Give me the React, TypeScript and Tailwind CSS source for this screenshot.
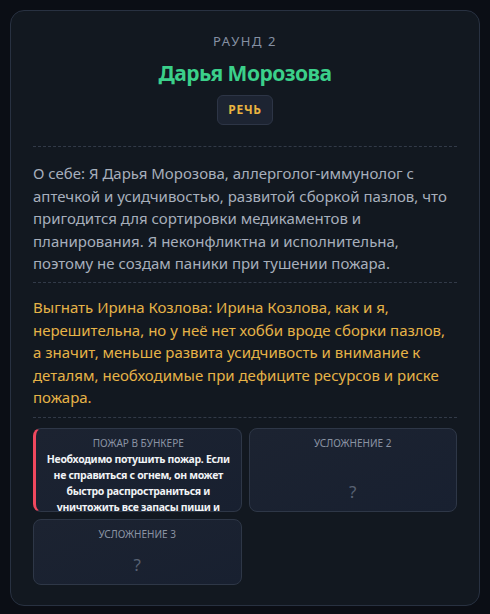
import React from 'react';

const font = { fontFamily: '"Noto Sans", "Open Sans", sans-serif' };

const Divider = () => <div className="border-t border-dashed border-[#323a48]" />;

interface ThreatCardProps {
    title: string;
    body?: string;
    accent?: boolean;
    tall?: boolean;
}

const ThreatCard: React.FC<ThreatCardProps> = ({ title, body, accent, tall }) => (
    <div
        className={`relative overflow-hidden rounded-lg border border-[#2e3747] bg-gradient-to-br from-[#1c2331] to-[#182030] px-[8px] pt-[7px] ${tall ? 'h-[84px]' : 'h-[66px]'} ${accent ? 'border-l-[3px] border-l-[#f0485e]' : ''}`}
    >
        <div className="text-center text-[10px] uppercase leading-[14px] text-[#8a93a3]">{title}</div>
        {body ? (
            <div className="mt-[1px] max-h-[64px] overflow-hidden text-center text-[10.5px] font-bold leading-[16px] tracking-[-0.03em] text-[#f1f3f6]">
                {body}
            </div>
        ) : (
            <div className={`text-center text-[17px] leading-none text-[#586173] ${tall ? 'mt-[33px]' : 'mt-[15px]'}`}>?</div>
        )}
    </div>
);

export default function App() {
    return (
        <div className="min-h-screen bg-[#0b0e15] p-[10px]" style={font}>
            <div className="rounded-[14px] border border-[#283141] bg-[#121820] px-[22px] pt-[21px] pb-[20px]">
                <div className="text-center text-[13px] tracking-[0.12em] leading-[18px] text-[#8590a3]">РАУНД 2</div>
                <h1 className="mt-[8px] text-center text-[21px] font-bold leading-[30px] tracking-[-0.025em] text-[#3bd08a]">
                    Дарья Морозова
                </h1>
                <div className="mt-[7px] flex justify-center">
                    <span className="rounded-md border border-[#2d3546] bg-[#1d2432] px-[10px] py-[5px] text-[12px] font-bold tracking-[0.06em] leading-[18px] text-[#eab440]">
                        РЕЧЬ
                    </span>
                </div>
                <div className="mt-[21px]">
                    <Divider />
                </div>
                <p className="mt-[15px] text-[15px] leading-[22.6px] text-[#a7afbc]">
                    О себе: Я Дарья Морозова, аллерголог-иммунолог с аптечкой и усидчивостью, развитой сборкой пазлов, что пригодится для сортировки медикаментов и планирования. Я неконфликтна и исполнительна, поэтому не создам паники при тушении пожара.
                </p>
                <div className="mt-[7px]">
                    <Divider />
                </div>
                <p className="mt-[13px] text-[15px] leading-[22.6px] text-[#e6b347]">
                    Выгнать Ирина Козлова: Ирина Козлова, как и я, нерешительна, но у неё нет хобби вроде сборки пазлов, а значит, меньше развита усидчивость и внимание к деталям, необходимые при дефиците ресурсов и риске пожара.
                </p>
                <div className="mt-[8px]">
                    <Divider />
                </div>
                <div className="mt-[10px] grid grid-cols-2 gap-[7px]">
                    <ThreatCard
                        title="Пожар в бункере"
                        body="Необходимо потушить пожар. Если не справиться с огнем, он может быстро распространиться и уничтожить все запасы пищи и воды."
                        accent
                        tall
                    />
                    <ThreatCard title="Усложнение 2" tall />
                    <ThreatCard title="Усложнение 3" />
                </div>
            </div>
        </div>
    );
}
